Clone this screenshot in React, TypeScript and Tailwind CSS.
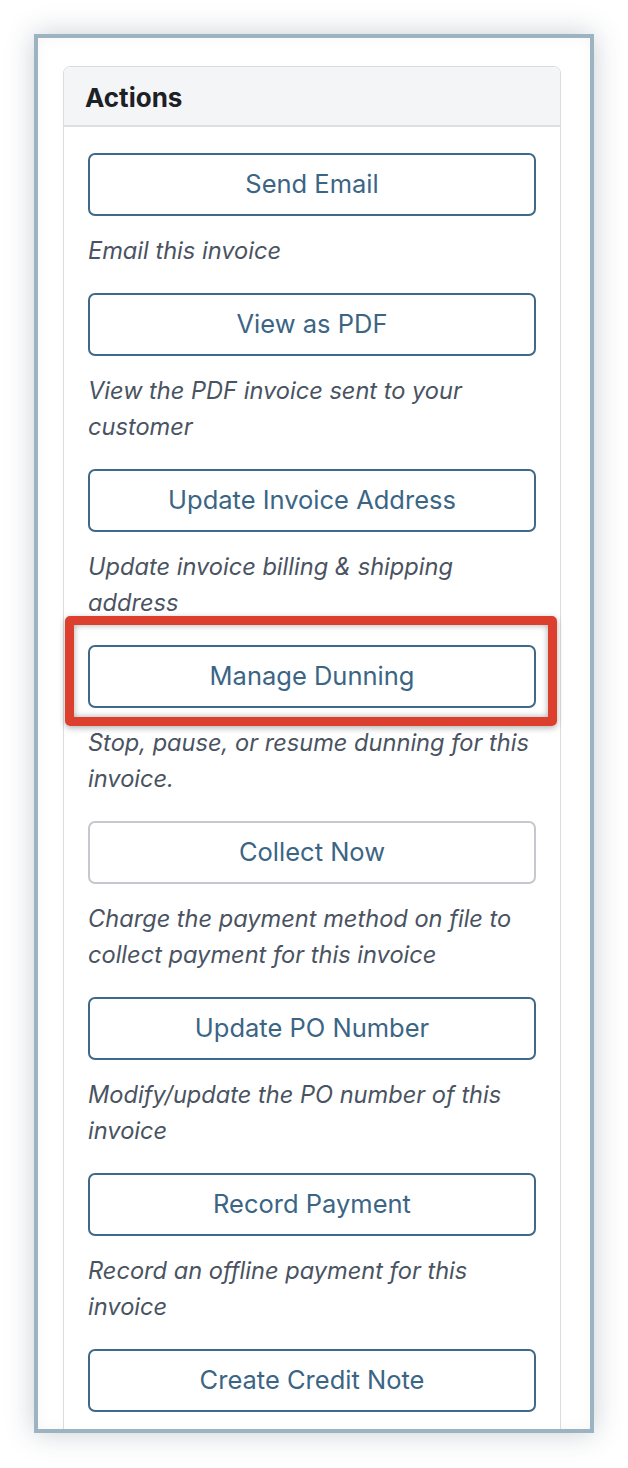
import React from "react";

type Action = {
  label: string;
  description: string;
  muted?: boolean;
  highlighted?: boolean;
};

const actions: Action[] = [
  { label: "Send Email", description: "Email this invoice" },
  { label: "View as PDF", description: "View the PDF invoice sent to your customer" },
  { label: "Update Invoice Address", description: "Update invoice billing & shipping address" },
  {
    label: "Manage Dunning",
    description: "Stop, pause, or resume dunning for this invoice.",
    highlighted: true,
  },
  {
    label: "Collect Now",
    description: "Charge the payment method on file to collect payment for this invoice",
    muted: true,
  },
  { label: "Update PO Number", description: "Modify/update the PO number of this invoice" },
  { label: "Record Payment", description: "Record an offline payment for this invoice" },
  { label: "Create Credit Note", description: "" },
];

function ActionButton({ action }: { action: Action }) {
  return (
    <div className="relative">
      <button
        type="button"
        className={`flex h-[63px] w-full items-center justify-center rounded-[7px] border-2 bg-white text-[25.5px] text-[#3b6584] ${
          action.muted ? "border-[#c5c8cc]" : "border-[#3e6a89]"
        }`}
      >
        {action.label}
      </button>
      {action.highlighted && (
        <div className="pointer-events-none absolute -top-[29px] -bottom-[18px] -left-[23px] -right-[21px] rounded-[5px] border-[9px] border-[#dc3f2d] shadow-[0_2px_6px_rgba(0,0,0,0.3),inset_0_0_6px_rgba(0,0,0,0.35)]" />
      )}
    </div>
  );
}

export default function App() {
  return (
    <div
      className="min-h-[1468px] w-[628px] bg-white pt-[34px] pl-[34px]"
      style={{ fontFamily: "Inter, 'Noto Sans', sans-serif" }}
    >
      <div className="h-[1399px] w-[560px] overflow-hidden border-4 border-[#9cb3c1] bg-white pt-[28px] pl-[25px] shadow-[0_0_26px_rgba(40,60,80,0.25),inset_0_0_14px_rgba(0,0,0,0.04)]">
        <div className="w-[498px] rounded-t-[7px] border border-[#d9dce0] bg-white">
          <div className="flex h-[60px] items-center rounded-t-[7px] border-b-2 border-[#dcdfe3] bg-[#f4f5f7] pt-[2px] pl-[21px]">
            <h2 className="text-[26px] font-bold text-[#1d2024]">Actions</h2>
          </div>
          <div className="flex flex-col px-[24px] pt-[26px] pb-[60px]">
            {actions.map((action) => (
              <div key={action.label} className="flex flex-col">
                <ActionButton action={action} />
                {action.description && (
                  <p className="mt-[17px] mb-[24px] -mr-[8px] text-[23.6px] leading-[36px] text-[#4a5361] italic">
                    {action.description}
                  </p>
                )}
              </div>
            ))}
          </div>
        </div>
      </div>
    </div>
  );
}
